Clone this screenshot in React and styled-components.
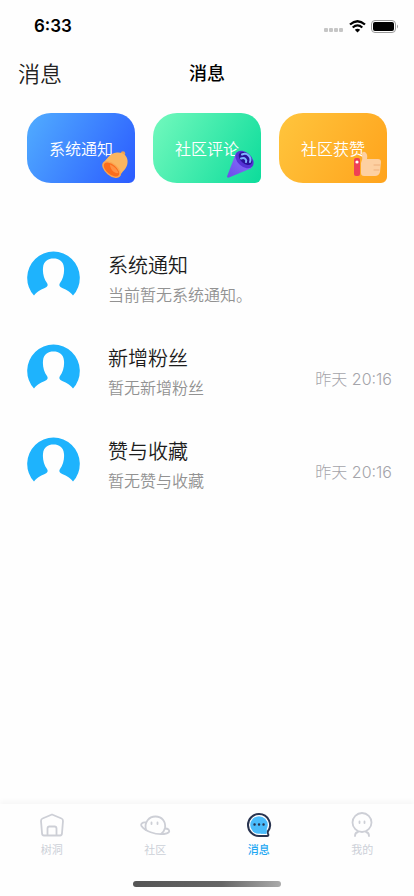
import styled, { createGlobalStyle } from 'styled-components'

const GlobalStyle = createGlobalStyle`
  * {
    box-sizing: border-box;
  }
  body {
    margin: 0;
    background: #fefefe;
    font-family: Inter, 'Noto Sans CJK SC', sans-serif;
  }
  button {
    font-family: inherit;
    border: none;
    background: none;
    padding: 0;
    cursor: pointer;
  }
`

const Page = styled.div`
  display: flex;
  flex-direction: column;
  min-height: 100vh;
`

const StatusBar = styled.div`
  display: flex;
  justify-content: space-between;
  align-items: center;
  height: 52px;
  padding: 0 15px 0 34px;
`

const Clock = styled.span`
  font-size: 17px;
  font-weight: 600;
  color: #000;
`

const StatusIcons = styled.div`
  display: flex;
  align-items: center;
  gap: 5px;
`

const Header = styled.header`
  display: grid;
  grid-template-columns: 1fr auto 1fr;
  align-items: center;
  height: 40px;
  padding: 0 18px;
`

const HeaderLabel = styled.span`
  font-size: 22px;
  font-weight: 350;
  color: #222;
`

const HeaderTitle = styled.h1`
  margin: 0;
  font-size: 18px;
  font-weight: 500;
  color: #000;
`

const Cards = styled.section`
  display: grid;
  grid-template-columns: repeat(3, 1fr);
  gap: 18px;
  padding: 21px 27px 0;
`

const Card = styled.button`
  position: relative;
  height: 70px;
  border-radius: 24px 20px 6px 24px;
  background: linear-gradient(120deg, ${(props) => props.$from}, ${(props) => props.$to});
  color: #fff;
  font-size: 16px;
  font-weight: 350;
`

const CardIcon = styled.svg`
  position: absolute;
  right: 4px;
  bottom: 4px;
  width: 30px;
  height: 30px;
`

const MessageList = styled.ul`
  display: flex;
  flex: 1;
  flex-direction: column;
  gap: 40px;
  margin: 0;
  padding: 68px 22px 40px 27px;
  list-style: none;
`

const MessageRow = styled.li`
  display: flex;
  align-items: center;
  height: 53px;
`

const Avatar = styled.svg`
  flex: none;
  width: 53px;
  height: 53px;
  margin-right: 28px;
`

const MessageBody = styled.div`
  flex: 1;
  padding-top: 4px;
`

const MessageTitle = styled.h2`
  margin: 0;
  font-size: 20px;
  line-height: 30px;
  font-weight: 350;
  color: #1c1c1c;
`

const MessageText = styled.p`
  margin: 0;
  font-size: 16px;
  line-height: 28px;
  font-weight: 350;
  color: #929292;
`

const MessageTime = styled.time`
  padding-top: 16px;
  font-size: 16px;
  line-height: 24px;
  font-weight: 300;
  color: #a4a4aa;
`

const TabBar = styled.nav`
  display: grid;
  grid-template-columns: repeat(4, 1fr);
  height: 77px;
  padding-top: 6px;
  box-shadow: 0 -3px 5px rgba(0, 0, 0, 0.03);
`

const Tab = styled.button`
  display: flex;
  flex-direction: column;
  align-items: center;
  gap: 2px;
  color: ${(props) => (props.$active ? '#22a7f2' : '#ccd0d8')};
  font-size: 11px;
  line-height: 16px;
  font-weight: ${(props) => (props.$active ? 500 : 400)};
`

const TabIcon = styled.svg`
  width: 32px;
  height: 30px;
  fill: none;
  stroke: #cdcfd6;
  stroke-width: 1.8;
  stroke-linecap: round;
  stroke-linejoin: round;
`

const HomeIndicator = styled.div`
  width: 148px;
  height: 6px;
  margin: 0 auto 9px;
  border-radius: 3px;
  background: linear-gradient(90deg, #555, #666 60%, #aaa);
`

const BellIcon = () => (
  <CardIcon viewBox="0 0 30 30" aria-hidden="true">
    <circle cx="22" cy="4.5" r="2.2" fill="#f0a04c" />
    <path d="M2 14C5 12 8 4 16 3.5C23 3 27.5 8 26.5 14C26 20 21 22 19 27Z" fill="#fab660" />
    <ellipse cx="10.5" cy="20.5" rx="11" ry="6.2" transform="rotate(40 10.5 20.5)" fill="#f9a552" />
    <ellipse cx="10.5" cy="20.5" rx="9.2" ry="4.8" transform="rotate(40 10.5 20.5)" fill="#fb6d1c" />
    <path d="M9 15.5C13 17 16.500 20.500 17.500 24C13 25 9 20 9 15.500Z" fill="#ff9142" />
  </CardIcon>
)

const PopperIcon = () => (
  <CardIcon viewBox="0 0 30 30" aria-hidden="true">
    <defs>
      <linearGradient id="cone" x1="0" y1="1" x2="1" y2="0">
        <stop offset="0" stopColor="#6a4de8" />
        <stop offset="1" stopColor="#8f72ff" />
      </linearGradient>
    </defs>
    <path d="M9 4L0 27.5Q0 29 2 28.5L25 19Z" fill="url(#cone)" />
    <ellipse cx="17.5" cy="10.5" rx="10.5" ry="7" transform="rotate(42 17.5 10.5)" fill="#5632d6" />
    <ellipse cx="18.5" cy="9.5" rx="8" ry="5" transform="rotate(42 18.5 9.5)" fill="#2b1299" />
    <path
      d="M15 5.5C20 3 25 8 23 13M14 9.5C18 8 20 11 19 13"
      fill="none"
      stroke="#7fb0ff"
      strokeWidth="2"
      strokeLinecap="round"
    />
  </CardIcon>
)

const ThumbIcon = () => (
  <CardIcon viewBox="0 0 30 30" aria-hidden="true">
    <rect x="1" y="9" width="6" height="18" rx="2" fill="#ef4056" />
    <circle cx="4" cy="13" r="1.6" fill="#fff" />
    <path
      d="M8 14Q10 10 9 5Q9 2 12 3Q15 5 14 10H25Q28 10 28 13L27 23Q26 27 22 27H11Q8 27 8 24Z"
      fill="#fdd0a2"
    />
    <path d="M21 16H27M21 21H26" stroke="#eeb07c" strokeWidth="1" strokeLinecap="round" />
  </CardIcon>
)

const AvatarIcon = () => (
  <Avatar viewBox="0 0 53 53" aria-hidden="true">
    <path
      d="M7 44.5A26.3 26.3 0 1 1 46 44.5C43 40 38 38.5 33.500 36Q31.500 34.500 33 32C36 28 37.500 22 37 17C36.500 10 32 7.500 26.500 7.500C21 7.500 16.500 10 16 17C15.500 22 17 28 20 32Q21.500 34.500 19.500 36C15 38.500 10 40 7 44.500Z"
      fill="#1eb3fd"
    />
  </Avatar>
)

const HomeIcon = () => (
  <TabIcon viewBox="0 0 32 30" aria-hidden="true">
    <path d="M16 4.5L25.5 8.5Q27 9 27 11L26 23Q26 25.5 24 25.5H8Q6 25.5 6 23L5 11Q5 9 6.5 8.5Z" />
    <path d="M11.5 25V18.5Q11.5 16.5 13.5 16.5H18.5Q20.5 16.5 20.5 18.5V25" />
  </TabIcon>
)

const PlanetIcon = () => (
  <TabIcon viewBox="0 0 32 30" aria-hidden="true">
    <path d="M7 20C5 12 10 6.5 16.5 6.5C23 6.5 27 11.5 26 18Q25 22 22 24" />
    <path d="M7 12.5C3 12 1.5 14 2.5 16C6 21 16 25 25 24C29 23.5 31.5 22 29.5 19.5Q28.5 18.5 26 18.5" />
    <path d="M12.5 12.5V14M18.5 12.5V14" />
  </TabIcon>
)

const ChatIcon = () => (
  <TabIcon viewBox="0 0 32 30" aria-hidden="true">
    <path
      d="M16 4A11 11 0 1 0 16 26H24Q26 26 25 23.5L24.5 22A11 11 0 0 0 16 4Z"
      fill="#fff"
      stroke="#28334f"
      strokeWidth="2"
    />
    <circle cx="16" cy="15" r="8.8" fill="#4abcfb" stroke="none" />
    <path d="M17 23.7L24 19L23.5 24Z" fill="#4abcfb" stroke="none" />
    <path d="M11.5 14.5H11.6M16 14.5H16.1M20.5 14.5H20.6" stroke="#28334f" strokeWidth="2.4" />
  </TabIcon>
)

const MineIcon = () => (
  <TabIcon viewBox="0 0 32 30" aria-hidden="true">
    <circle cx="16" cy="12.5" r="9.5" />
    <path d="M13.5 11.5V13M18.5 11.5V13" />
    <path d="M9 26Q9 22.5 12 22M23 26Q23 22.5 20 22" />
  </TabIcon>
)

const cards = [
  { label: '系统通知', from: '#51adff', to: '#2b5bff', Icon: BellIcon },
  { label: '社区评论', from: '#73f9bd', to: '#0cdc9b', Icon: PopperIcon },
  { label: '社区获赞', from: '#ffc53d', to: '#ffa31c', Icon: ThumbIcon },
]

const messages = [
  { title: '系统通知', text: '当前暂无系统通知。' },
  { title: '新增粉丝', text: '暂无新增粉丝', time: '昨天 20:16' },
  { title: '赞与收藏', text: '暂无赞与收藏', time: '昨天 20:16' },
]

const tabs = [
  { label: '树洞', Icon: HomeIcon },
  { label: '社区', Icon: PlanetIcon },
  { label: '消息', Icon: ChatIcon, active: true },
  { label: '我的', Icon: MineIcon },
]

function App() {
  return (
    <Page>
      <GlobalStyle />
      <StatusBar>
        <Clock>6:33</Clock>
        <StatusIcons>
          <svg width="20" height="14" viewBox="0 0 20 14" fill="#c6c6c6" aria-hidden="true">
            <rect x="0" y="9" width="4" height="4" rx="1" />
            <rect x="5" y="9" width="4" height="4" rx="1" />
            <rect x="10" y="9" width="4" height="4" rx="1" />
            <rect x="15" y="9" width="4" height="4" rx="1" />
          </svg>
          <svg width="17" height="13" viewBox="0 0 17 13" fill="none" stroke="#000" aria-hidden="true">
            <path d="M1 4.5Q8.5 -2 16 4.5" strokeWidth="2.3" />
            <path d="M3.7 7.5Q8.5 3.3 13.3 7.5" strokeWidth="2.2" />
            <path d="M8.5 12.5L5.8 9.8Q8.5 7.5 11.2 9.8Z" fill="#000" stroke="none" />
          </svg>
          <svg width="28" height="13" viewBox="0 0 28 13" aria-hidden="true">
            <rect x="0.5" y="0.5" width="24" height="12" rx="3.5" fill="none" stroke="#999" />
            <rect x="2" y="2" width="21" height="9" rx="2" fill="#000" />
            <path d="M26 4.5Q28 6.5 26 8.5Z" fill="#999" />
          </svg>
        </StatusIcons>
      </StatusBar>
      <Header>
        <HeaderLabel>消息</HeaderLabel>
        <HeaderTitle>消息</HeaderTitle>
      </Header>
      <Cards>
        {cards.map(({ label, from, to, Icon }) => (
          <Card key={label} type="button" $from={from} $to={to}>
            {label}
            <Icon />
          </Card>
        ))}
      </Cards>
      <MessageList>
        {messages.map(({ title, text, time }) => (
          <MessageRow key={title}>
            <AvatarIcon />
            <MessageBody>
              <MessageTitle>{title}</MessageTitle>
              <MessageText>{text}</MessageText>
            </MessageBody>
            {time && <MessageTime>{time}</MessageTime>}
          </MessageRow>
        ))}
      </MessageList>
      <TabBar>
        {tabs.map(({ label, Icon, active }) => (
          <Tab key={label} type="button" $active={active}>
            <Icon />
            {label}
          </Tab>
        ))}
      </TabBar>
      <HomeIndicator />
    </Page>
  )
}

export default App
